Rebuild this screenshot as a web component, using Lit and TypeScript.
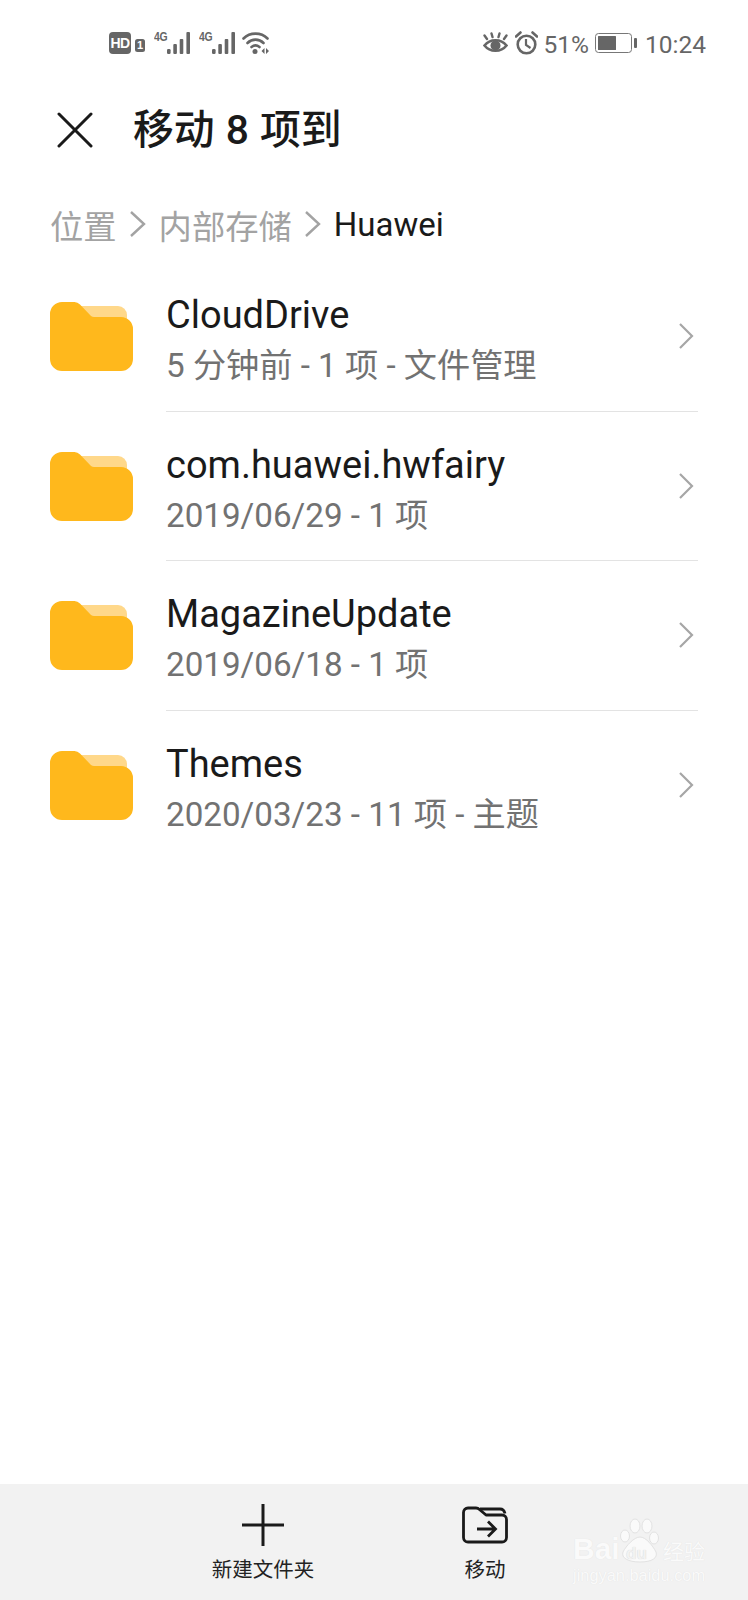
import { LitElement, html, css, svg } from "lit";
import { customElement } from "lit/decorators.js";

const rows = [
  { name: "CloudDrive", sub: "5 分钟前 - 1 项 - 文件管理" },
  { name: "com.huawei.hwfairy", sub: "2019/06/29 - 1 项" },
  { name: "MagazineUpdate", sub: "2019/06/18 - 1 项" },
  { name: "Themes", sub: "2020/03/23 - 11 项 - 主题" },
];

const bars = svg`<rect x="0" y="17" width="3.600" height="5" rx="1.200"/><rect x="6.300" y="12" width="3.600" height="10" rx="1"/><rect x="12.700" y="7" width="3.600" height="15" rx="1"/><rect x="19.400" y="0" width="3.600" height="22" rx="1"/>`;

@customElement("app-root")
export class AppRoot extends LitElement {
  static styles = css`
    :host { display: block; width: 748px; height: 1600px; background: #fff; overflow: hidden; font-family: Roboto, "Noto Sans CJK SC", sans-serif; color: #1a1a1a; }
    .page { display: flex; flex-direction: column; height: 1600px; position: relative; }
    .status { height: 86px; flex: none; display: flex; align-items: center; color: #666; padding: 0 42px 0 109px; }
    .status svg { display: block; flex: none; fill: #666; }
    .hd { width: 22px; height: 22px; border-radius: 4px; background: #666; color: #fff; font-size: 14px; font-weight: 900; line-height: 22px; text-align: center; letter-spacing: -0.5px; font-family: "Liberation Sans", sans-serif; }
    .sim { width: 10px; height: 13px; margin: 5px 0 0 4px; border-radius: 2.500px; background: #666; color: #fff; font-size: 11px; font-weight: 700; line-height: 13px; text-align: center; font-family: "Liberation Sans", sans-serif; }
    .sig { position: relative; width: 36px; height: 24px; margin-left: 9px; flex: none; }
    .sig span { position: absolute; left: 0; top: -1px; font-size: 13px; font-weight: 700; line-height: 13px; font-family: "Liberation Sans", sans-serif; transform: scaleX(0.8); transform-origin: left; letter-spacing: -0.2px; }
    .sig svg { position: absolute; right: 0; top: 1px; }
    .wifi { margin-left: 7px; }
    .spacer { flex: 1; }
    .pct { font-size: 24.500px; margin: 2px 0 0 6px; }
    .batt { margin-left: 6px; }
    .clock { font-size: 24.500px; margin: 2px 0 0 8px; }
    .alarm { margin-left: 7px; }

    .head { height: 88px; flex: none; display: flex; align-items: center; padding-left: 57px; }
    .head svg { display: block; flex: none; }
    .title { margin-left: 40px; font-size: 40.800px; font-weight: 500; line-height: 48px; word-spacing: 1px; }

    .crumbs { height: 88px; flex: none; box-sizing: border-box; padding: 12px 0 0 50px; display: flex; align-items: center; font-size: 33.300px; color: #a3a3a3; }
    .crumbs svg { margin: 0 12px; flex: none; display: block; }
    .crumbs b { font-weight: 400; color: #1a1a1a; font-size: 33px; }

    .list { display: flex; flex-direction: column; }
    .row { height: 149.500px; flex: none; display: flex; align-items: center; padding: 0 50px; box-sizing: border-box; }
    .row .ic { flex: none; display: block; margin-right: 33px; }
    .body { flex: 1; align-self: stretch; display: flex; align-items: center; border-bottom: 1px solid #e3e3e3; }
    .row:last-child .body { border-bottom: 0; }
    .text { flex: 1; padding-top: 8px; }
    .name { font-size: 38px; line-height: 44px; color: #1a1a1a; }
    .sub { font-size: 33.200px; line-height: 42px; margin-top: 8px; color: #727272; }
    .body svg { flex: none; display: block; margin-right: 4px; }

    .foot { position: absolute; left: 0; right: 0; top: 1484px; height: 116px; background: #f2f2f2; display: flex; justify-content: center; }
    .act { width: 222px; display: flex; flex-direction: column; align-items: center; padding-top: 20px; box-sizing: border-box; }
    .glyph { height: 42px; display: flex; align-items: center; }
    .act svg { display: block; }
    .act span { font-size: 20.500px; line-height: 28px; margin-top: 10px; color: #222; }

    .mark { position: absolute; left: 573px; top: 1518px; width: 136px; height: 66px; color: #fafafa; font-family: "Liberation Sans", sans-serif; }
    .mark span { position: absolute; white-space: nowrap; text-shadow: 0 0 1px #dedede; }
    .mark .bai { left: 0; top: 15px; font-size: 30px; font-weight: 700; line-height: 32px; }
    .mark .du { left: 53px; top: 27px; font-size: 17px; font-weight: 700; line-height: 18px; color: #f2f2f2; text-shadow: 0 0 1px #ccc; }
    .mark .jy { left: 90px; top: 19px; font-size: 21px; line-height: 26px; font-family: "Noto Sans CJK SC", sans-serif; }
    .mark .url { left: 0; top: 48px; font-size: 16.400px; line-height: 18px; }
    .mark svg { position: absolute; left: 47px; top: 0; }
  `;

  private folder() {
    return html`<svg class="ic" width="83" height="69" viewBox="0 0 83 69">
      <path d="M30 4H68a9 9 0 0 1 9 9v10H40z" fill="#ffd88a"/>
      <path d="M12 0H24a8 8 0 0 1 6 2.500L41 14q1.500 1 3 1H71a12 12 0 0 1 12 12V57a12 12 0 0 1-12 12H12A12 12 0 0 1 0 57V12A12 12 0 0 1 12 0z" fill="#ffb81c"/>
    </svg>`;
  }

  render() {
    return html`<div class="page">
      <div class="status">
        <div class="hd">HD</div>
        <div class="sim">1</div>
        <div class="sig"><span>4G</span><svg width="23" height="22" viewBox="0 0 23 22">${bars}</svg></div>
        <div class="sig"><span>4G</span><svg width="23" height="22" viewBox="0 0 23 22">${bars}</svg></div>
        <svg class="wifi" width="28" height="24" viewBox="0 0 28 24">
          <g fill="none" stroke="#666" stroke-width="2.600" stroke-linecap="round">
            <path d="M1.500 7.500C8 1 19 1 25.500 7.500"/><path d="M5.500 12C10 7.500 17 7.500 21.500 12"/><path d="M9.500 16C12 14 15 14 17.500 16"/>
          </g>
          <circle cx="13" cy="20.500" r="2.500"/>
          <path d="M22.500 17v6l-3-3zM24 17v6l3-3z"/>
        </svg>
        <div class="spacer"></div>
        <svg width="25" height="22" viewBox="0 0 25 22">
          <path d="M1.500 13.500C7 6.500 18 6.500 23.500 13.500C18 20.500 7 20.500 1.500 13.500z" fill="none" stroke="#666" stroke-width="2.600"/>
          <circle cx="12.500" cy="13.500" r="5"/>
          <path d="M4 7L1.500 3.500M9.500 5L8.500 1.500M15.500 5L16.500 1.500M21 7l2.500-3.500" stroke="#666" stroke-width="2.400" fill="none" stroke-linecap="round"/>
        </svg>
        <svg class="alarm" width="23" height="24" viewBox="0 0 23 24">
          <circle cx="11.500" cy="13.500" r="8.800" fill="none" stroke="#666" stroke-width="2.600"/>
          <path d="M11 8v6l4.500 3" fill="none" stroke="#666" stroke-width="2.200"/>
          <path d="M1 5.500L5.500 1.500M22 5.500L17.500 1.500" stroke="#666" stroke-width="2.600" fill="none" stroke-linecap="round"/>
        </svg>
        <span class="pct">51%</span>
        <svg class="batt" width="42" height="20" viewBox="0 0 42 20">
          <rect x="0.500" y="0.500" width="36" height="19" rx="3" fill="none" stroke="#777" stroke-width="1"/>
          <rect x="3" y="3" width="18" height="14" rx="0.500"/>
          <rect x="39" y="5" width="3" height="10" rx="1"/>
        </svg>
        <span class="clock">10:24</span>
      </div>

      <div class="head">
        <svg width="36" height="36" viewBox="0 0 36 36"><path d="M2 2L34 34M34 2L2 34" stroke="#1a1a1a" stroke-width="3" fill="none" stroke-linecap="round"/></svg>
        <div class="title">移动 8 项到</div>
      </div>

      <div class="crumbs">
        <span>位置</span>
        <svg width="18" height="28" viewBox="0 0 18 28"><path d="M2 2L15 14L2 26" fill="none" stroke="#a3a3a3" stroke-width="2.400"/></svg>
        <span>内部存储</span>
        <svg width="18" height="28" viewBox="0 0 18 28"><path d="M2 2L15 14L2 26" fill="none" stroke="#a3a3a3" stroke-width="2.400"/></svg>
        <b>Huawei</b>
      </div>

      <div class="list">
        ${rows.map((r) => html`<div class="row">
          ${this.folder()}
          <div class="body">
            <div class="text"><div class="name">${r.name}</div><div class="sub">${r.sub}</div></div>
            <svg width="16" height="28" viewBox="0 0 16 28"><path d="M2 2L14 14L2 26" fill="none" stroke="#a6a6a6" stroke-width="2.200"/></svg>
          </div>
        </div>`)}
      </div>

      <div class="foot">
        <div class="act">
          <div class="glyph"><svg width="42" height="42" viewBox="0 0 42 42"><path d="M21 0V42M0 21H42" stroke="#1a1a1a" stroke-width="3" stroke-linecap="round" fill="none"/></svg></div>
          <span>新建文件夹</span>
        </div>
        <div class="act">
          <div class="glyph"><svg width="46" height="38" viewBox="0 0 46 38">
            <path d="M6 2H14q2 0 3.500 1.500L24 9H40a4.500 4.500 0 0 1 4.500 4.500V31.500A4.500 4.500 0 0 1 40 36H6A4.500 4.500 0 0 1 1.500 31.500V6.500A4.500 4.500 0 0 1 6 2z" fill="none" stroke="#1a1a1a" stroke-width="2.800" stroke-linejoin="round"/>
            <path d="M18 3H38q4 0 5 4.500" fill="none" stroke="#1a1a1a" stroke-width="2.800"/>
            <path d="M15 23H33M26 15.500L33.500 23L26 30.500" fill="none" stroke="#1a1a1a" stroke-width="2.800"/>
          </svg></div>
          <span>移动</span>
        </div>
      </div>

      <div class="mark">
        <span class="bai">Bai</span>
        <svg width="40" height="46" viewBox="0 0 40 46" fill="#fafafa" stroke="#e2e2e2">
          <ellipse cx="5" cy="18" rx="4.500" ry="6"/><ellipse cx="15" cy="8" rx="5" ry="7"/><ellipse cx="27" cy="8" rx="5" ry="7"/><ellipse cx="34" cy="20" rx="4.500" ry="6"/>
          <path d="M20 19C26 19 33 28 36 34C38 40 32 44 20 44C8 44 1 40 3 34C6 28 14 19 20 19z"/>
        </svg>
        <span class="du">du</span>
        <span class="jy">经验</span>
        <span class="url">jingyan.baidu.com</span>
      </div>
    </div>`;
  }
}
